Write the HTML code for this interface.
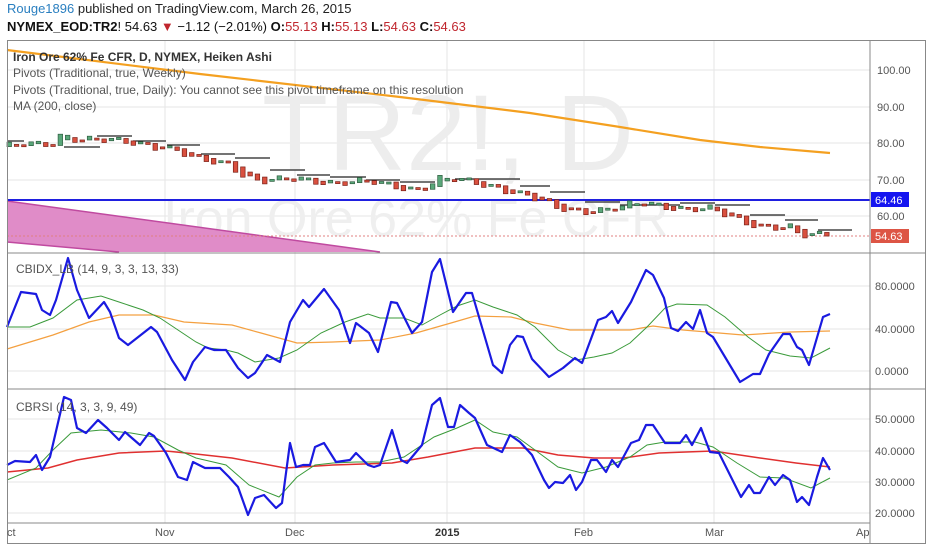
<!DOCTYPE html>
<html><head><meta charset="utf-8"><style>
body{margin:0;background:#fff;width:932px;height:550px;overflow:hidden;font-family:"Liberation Sans",sans-serif}
.h1{position:absolute;left:7px;top:1px;font-size:13px;color:#222}
.h1 b{color:#2a7fc0;font-weight:normal}
.h2{position:absolute;left:7px;top:19px;font-size:13px;color:#111}
.r{color:#c0262e}
</style></head><body>
<div class="h1"><b>Rouge1896</b> published on TradingView.com, March 26, 2015</div>
<div class="h2"><span style="font-weight:bold">NYMEX_EOD:TR2</span>! 54.63 <span class="r">▼</span> −1.12 (−2.01%) <b>O:</b><span class="r">55.13</span> <b>H:</b><span class="r">55.13</span> <b>L:</b><span class="r">54.63</span> <b>C:</b><span class="r">54.63</span></div>
<svg id="s" width="932" height="550" style="position:absolute;left:0;top:0" font-family="Liberation Sans, sans-serif">
<g stroke="#e6e6e6" stroke-width="1">
<line x1="165" y1="41" x2="165" y2="523"/><line x1="295" y1="41" x2="295" y2="523"/><line x1="447" y1="41" x2="447" y2="523"/><line x1="584" y1="41" x2="584" y2="523"/><line x1="714" y1="41" x2="714" y2="523"/>
<line x1="7" y1="70" x2="870" y2="70"/><line x1="7" y1="107" x2="870" y2="107"/><line x1="7" y1="143" x2="870" y2="143"/><line x1="7" y1="180" x2="870" y2="180"/><line x1="7" y1="216" x2="870" y2="216"/>
<line x1="7" y1="286" x2="870" y2="286"/><line x1="7" y1="329" x2="870" y2="329"/><line x1="7" y1="371" x2="870" y2="371"/>
<line x1="7" y1="419" x2="870" y2="419"/><line x1="7" y1="451" x2="870" y2="451"/><line x1="7" y1="482" x2="870" y2="482"/><line x1="7" y1="513" x2="870" y2="513"/>
</g>
<text x="262" y="170" font-size="108" fill="#ededed">TR2!, D</text>
<text x="163" y="236" font-size="52" fill="#efefef">Iron Ore 62% Fe CFR</text>
<polygon points="7,201 380,252 119,252 7,242" fill="#e08cc8"/>
<line x1="7" y1="201" x2="380" y2="252" stroke="#c04aa0" stroke-width="1.5"/>
<line x1="7" y1="242" x2="119" y2="252" stroke="#c04aa0" stroke-width="1.5"/>
<polyline points="7,50 200,74 400,97 530,113 620,127 700,140 760,147 830,153" fill="none" stroke="#f4a020" stroke-width="2.2"/>
<line x1="7" y1="200" x2="870" y2="200" stroke="#1f1fe0" stroke-width="2"/>
<line x1="7" y1="236" x2="870" y2="236" stroke="#e08080" stroke-dasharray="2,2" stroke-width="1"/>
<g stroke="#222" stroke-width="1.2">
<line x1="7" y1="141" x2="24" y2="141"/><line x1="64" y1="147" x2="100" y2="147"/><line x1="97" y1="136" x2="132" y2="136"/><line x1="133" y1="141" x2="166" y2="141"/><line x1="167" y1="145" x2="200" y2="145"/><line x1="201" y1="154" x2="235" y2="154"/><line x1="235" y1="158" x2="270" y2="158"/><line x1="270" y1="170" x2="305" y2="170"/><line x1="297" y1="175" x2="330" y2="175"/><line x1="330" y1="177" x2="366" y2="177"/><line x1="366" y1="180" x2="400" y2="180"/><line x1="400" y1="182" x2="435" y2="182"/><line x1="455" y1="179" x2="520" y2="179"/><line x1="520" y1="186" x2="550" y2="186"/><line x1="550" y1="192" x2="585" y2="192"/><line x1="585" y1="202" x2="620" y2="202"/><line x1="620" y1="205" x2="680" y2="205"/><line x1="680" y1="203" x2="715" y2="203"/><line x1="715" y1="205" x2="750" y2="205"/><line x1="750" y1="215" x2="785" y2="215"/><line x1="785" y1="220" x2="818" y2="220"/><line x1="818" y1="230" x2="852" y2="230"/>
</g>
<g id="c"></g>
<text x="13" y="61" font-size="12" fill="#333" font-weight="bold">Iron Ore 62% Fe CFR, D, NYMEX, Heiken Ashi</text>
<text x="13" y="77" font-size="12" fill="#555">Pivots (Traditional, true, Weekly)</text>
<text x="13" y="94" font-size="12" fill="#555">Pivots (Traditional, true, Daily): You cannot see this pivot timeframe on this resolution</text>
<text x="13" y="110" font-size="12" fill="#555">MA (200, close)</text>
<polyline fill="none" stroke="#f4a040" stroke-width="1.2" points="7,349 53,335 89,322 119,315 154,315 184,322 232,325 261,333 297,343 333,342 380,340 416,333 451,323 475,316 511,317 535,323 570,330 630,330 653,326 683,330 743,335 790,332 830,331"/>
<polyline fill="none" stroke="#3a9a3a" stroke-width="1" points="7,327 30,327 53,318 77,300 101,296 119,302 143,310 160,318 178,330 196,342 208,348 226,350 238,353 255,362 279,358 297,350 321,333 345,322 368,314 380,318 404,318 422,325 440,315 457,306 475,300 493,307 517,315 535,327 558,350 576,360 594,357 612,353 630,343 647,327 665,308 677,304 707,305 725,317 748,337 766,350 790,356 811,358 830,348"/>
<polyline fill="none" stroke="#1a1ae0" stroke-width="2.2" stroke-linejoin="round" points="7,327 21,292 36,294 42,310 50,315 56,300 68,258 77,290 89,318 104,302 110,312 119,338 128,345 151,327 157,332 172,360 185,380 193,362 205,347 214,350 226,350 238,368 248,378 255,373 267,355 280,362 290,322 303,300 309,307 324,289 339,310 350,343 356,323 369,333 378,352 391,302 397,303 412,333 422,322 432,272 440,259 453,312 466,293 472,293 493,365 502,373 510,345 517,336 523,337 532,359 549,377 563,368 575,358 582,363 598,320 606,317 612,311 618,323 631,302 646,270 653,275 664,298 671,328 678,331 686,322 693,329 700,310 707,333 713,337 740,382 753,374 760,374 769,354 783,334 790,334 797,347 802,350 809,365 823,317 830,314"/>
<text x="16" y="273" font-size="12" fill="#555">CBIDX_LB (14, 9, 3, 3, 13, 33)</text>
<polyline fill="none" stroke="#e03030" stroke-width="1.5" points="7,472 48,468 77,460 119,453 166,451 196,454 232,458 285,468 333,465 392,463 428,457 475,448 523,448 558,455 594,458 624,458 659,453 713,451 760,458 796,463 830,467"/>
<polyline fill="none" stroke="#3a9a3a" stroke-width="1" points="7,480 36,468 53,450 71,433 101,430 131,433 154,437 178,450 196,458 226,465 249,485 279,497 297,477 315,465 333,463 356,462 380,462 404,457 434,437 457,428 475,420 493,432 517,437 535,450 558,467 582,473 606,467 630,457 647,445 665,442 695,442 713,447 737,463 760,477 784,478 811,488 830,478"/>
<polyline fill="none" stroke="#1a1ae0" stroke-width="2.2" stroke-linejoin="round" points="7,465 15,461 30,462 36,455 42,470 50,457 64,397 71,400 77,428 86,433 98,420 107,428 119,440 125,432 140,445 149,433 154,436 166,453 178,477 187,480 193,462 205,468 220,468 229,477 238,487 248,515 255,498 264,495 276,508 282,503 290,443 296,467 303,465 310,465 315,447 324,443 336,462 350,460 356,453 368,465 374,467 380,465 392,430 401,460 407,463 422,445 432,405 440,398 448,427 454,427 460,405 469,413 475,418 487,445 502,452 510,435 520,442 532,455 544,480 549,488 555,482 563,483 570,475 576,490 582,482 591,460 597,460 606,472 612,460 618,467 631,443 639,440 646,425 653,425 665,443 680,443 686,435 692,445 701,428 710,452 719,453 731,477 741,497 749,485 754,493 760,493 769,477 775,485 783,475 790,480 797,502 802,497 809,505 817,477 823,458 830,470"/>
<text x="16" y="411" font-size="12" fill="#555">CBRSI (14, 3, 3, 9, 49)</text>
<rect x="7.5" y="40.5" width="918" height="503" fill="none" stroke="#888"/>
<line x1="870" y1="40" x2="870" y2="543" stroke="#888"/>
<line x1="7" y1="253" x2="926" y2="253" stroke="#888"/>
<line x1="7" y1="389" x2="926" y2="389" stroke="#888"/>
<line x1="7" y1="523" x2="870" y2="523" stroke="#888"/>
<g font-size="11" fill="#555">
<text x="877" y="74">100.00</text><text x="877" y="111">90.00</text><text x="877" y="147">80.00</text><text x="877" y="184">70.00</text><text x="877" y="220">60.00</text>
<text x="875" y="290">80.0000</text><text x="875" y="333">40.0000</text><text x="875" y="375">0.0000</text>
<text x="875" y="423">50.0000</text><text x="875" y="455">40.0000</text><text x="875" y="486">30.0000</text><text x="875" y="517">20.0000</text>
<text x="7" y="536">ct</text><text x="155" y="536">Nov</text><text x="285" y="536">Dec</text><text x="435" y="536" font-weight="bold" fill="#333">2015</text><text x="574" y="536">Feb</text><text x="705" y="536">Mar</text><text x="856" y="536">Ap</text>
</g>
<rect x="871" y="192" width="38" height="15" fill="#1515f0"/><text x="875" y="204" font-size="11" fill="#fff">64.46</text>
<rect x="871" y="229" width="38" height="14" fill="#dd5545"/><text x="875" y="240" font-size="11" fill="#fff">54.63</text>
</svg>
<script>
var a=[[7,79],[40,79.5],[55,80],[62,83],[75,81.5],[100,80.5],[140,80],[165,79],[180,77.5],[195,75],[230,74.5],[245,71],[260,69.5],[285,69.5],[300,70],[330,69.5],[370,69],[400,68],[420,67.5],[440,70],[460,69.5],[490,68.5],[510,67],[530,65],[555,62],[590,61.5],[620,62],[645,63.5],[690,62],[710,61.5],[735,59],[760,57.5],[790,56.5],[800,54],[815,54.5],[830,55]];
function p(x){for(var i=1;i<a.length;i++)if(x<=a[i][0]){var t=(x-a[i-1][0])/(a[i][0]-a[i-1][0]);return a[i-1][1]+t*(a[i][1]-a[i-1][1]);}return 55;}
function y(v){return 143+(80-v)*3.63;}
var h='',po=p(7),pc=p(7),k=0;
for(var x=9;x<=830;x+=7.3){k++;var c=p(x)+0.9*Math.sin(k*1.7)+0.6*Math.sin(k*0.53),o=(po+pc)/2,t=Math.min(y(o),y(c)),b=Math.max(y(o),y(c));if(b-t<2){b=t+2;}var up=c>=o;h+='<rect x="'+(x-2)+'" y="'+t+'" width="4.5" height="'+(b-t)+'" fill="'+(up?'#5aa77a':'#d9503f')+'" stroke="'+(up?'#2e5e40':'#7a2018')+'" stroke-width="0.7"/>';po=o;pc=c;}
document.getElementById('c').innerHTML=h;
</script>
</body></html>
